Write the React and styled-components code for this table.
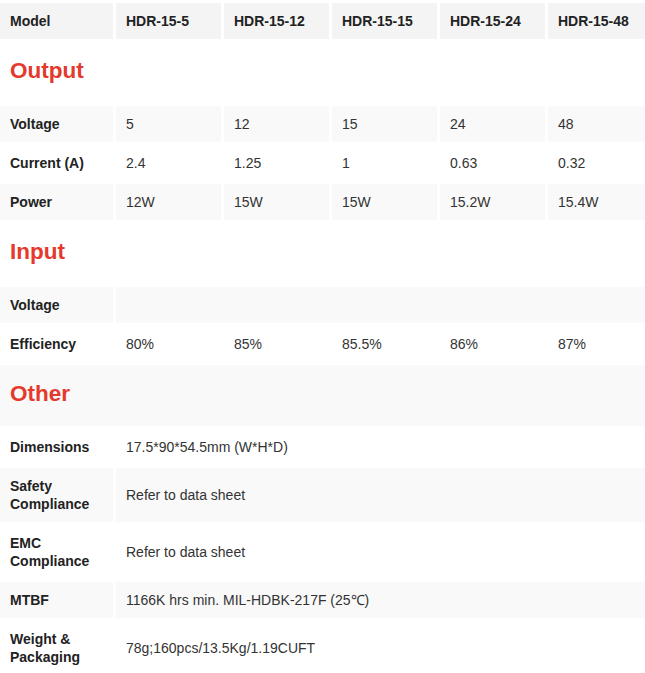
import React from 'react';
import styled, { createGlobalStyle } from 'styled-components';

const GlobalStyle = createGlobalStyle`
    body {
        margin: 0;
        background: #fff;
        font-family: "Liberation Sans", Arial, sans-serif;
    }
`
const Wrapper = styled.div`
    width: 645px;
    overflow: hidden;
`
const Table = styled.table`
    width: 651px;
    margin: 0 -3px;
    border-collapse: separate;
    border-spacing: 3px;
    table-layout: fixed;
    font-size: 14px;
    line-height: 18px;
    color: #333;

    tbody tr:nth-child(even) td,
    tbody tr:nth-child(even) th {
        background-color: #f9f9f9;
    }
`
const Label = styled.th`
    text-align: left;
    font-weight: bold;
    color: #222;
    padding: 9px 10px;
    vertical-align: middle;
`
const HeadCell = styled.th`
    text-align: left;
    font-weight: bold;
    color: #222;
    padding: 9px 10px;
    background-color: #f4f4f4;
`
const Cell = styled.td`
    padding: 9px 10px;
    vertical-align: middle;
`
const Section = styled.td`
    height: 61px;
    padding: 0 10px 3px;
    box-sizing: border-box;
    vertical-align: middle;
    font-size: 22.5px;
    font-weight: bold;
    color: #e4392c;
    line-height: 26px;
`

const models = ['HDR-15-5', 'HDR-15-12', 'HDR-15-15', 'HDR-15-24', 'HDR-15-48'];

const output = [
    ['Voltage', ['5', '12', '15', '24', '48']],
    ['Current (A)', ['2.4', '1.25', '1', '0.63', '0.32']],
    ['Power', ['12W', '15W', '15W', '15.2W', '15.4W']],
];

const other = [
    ['Dimensions', '17.5*90*54.5mm (W*H*D)'],
    ['Safety Compliance', 'Refer to data sheet'],
    ['EMC Compliance', 'Refer to data sheet'],
    ['MTBF', '1166K hrs min. MIL-HDBK-217F (25℃)'],
    ['Weight & Packaging', '78g;160pcs/13.5Kg/1.19CUFT'],
];

function ValueRow({ label, values }) {
    return (
        <tr>
            <Label>{label}</Label>
            {values.map((v, i) => <Cell key={i}>{v}</Cell>)}
        </tr>
    )
}

function SpanRow({ label, value }) {
    return (
        <tr>
            <Label>{label}</Label>
            <Cell colSpan={5}>{value}</Cell>
        </tr>
    )
}

export default function App() {
    return (
        <>
            <GlobalStyle />
            <Wrapper>
                <Table>
                    <colgroup>
                        <col style={{ width: 113 }} />
                        <col style={{ width: 105 }} />
                        <col style={{ width: 105 }} />
                        <col style={{ width: 105 }} />
                        <col style={{ width: 105 }} />
                        <col />
                    </colgroup>
                    <thead>
                        <tr>
                            <HeadCell>Model</HeadCell>
                            {models.map(m => <HeadCell key={m}>{m}</HeadCell>)}
                        </tr>
                    </thead>
                    <tbody>
                        <tr><Section colSpan={6}>Output</Section></tr>
                        {output.map(([l, v]) => <ValueRow key={l} label={l} values={v} />)}
                        <tr><Section colSpan={6}>Input</Section></tr>
                        <SpanRow label="Voltage" value="" />
                        <ValueRow label="Efficiency" values={['80%', '85%', '85.5%', '86%', '87%']} />
                        <tr><Section colSpan={6}>Other</Section></tr>
                        {other.map(([l, v]) => <SpanRow key={l} label={l} value={v} />)}
                    </tbody>
                </Table>
            </Wrapper>
        </>
    )
}
